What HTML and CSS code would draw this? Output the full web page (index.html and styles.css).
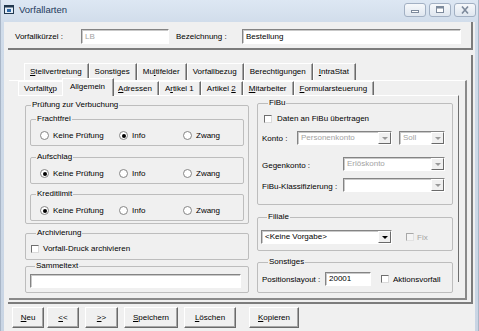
FILE: index.html
```html
<!DOCTYPE html>
<html lang="de">
<head>
  <meta charset="UTF-8">
  <title>Vorfallarten</title>
  <link rel="stylesheet" href="styles.css">
</head>
<body>
  <div class="window">
    <div class="titlebar">
      <svg class="appicon" width="11" height="10" viewBox="0 0 11 10">
        <rect x="0.5" y="0.5" width="9" height="8" fill="#e4edf7" stroke="#22384f"/>
        <rect x="0.5" y="0.5" width="9" height="2" fill="#22384f"/>
        <rect x="3" y="4" width="4" height="3" fill="#2f6aa8"/>
      </svg>
      <span class="title">Vorfallarten</span>
      <div class="winbtns">
        <span class="winbtn">
          <svg width="10" height="8" viewBox="0 0 10 8"><rect x="1.5" y="4.5" width="7" height="2" fill="#fff" stroke="#7d8a9c"/></svg>
        </span>
        <span class="winbtn">
          <svg width="10" height="8" viewBox="0 0 10 8"><rect x="1.5" y="0.5" width="7" height="6" fill="#fff" stroke="#7d8a9c"/><rect x="1.5" y="0.5" width="7" height="2" fill="#7d8a9c"/></svg>
        </span>
        <span class="winbtn">
          <svg width="10" height="8" viewBox="0 0 10 8"><path d="M2 0.5 L8 7.5 M8 0.5 L2 7.5" stroke="#7d8a9c" stroke-width="1.6"/></svg>
        </span>
      </div>
    </div>

    <div class="client">
      <div class="head">
        <span class="lbl-head">Vorfallkürzel :</span>
        <span class="edit edit-kuerzel off">LB</span>
        <span class="lbl-head lbl-bez">Bezeichnung :</span>
        <span class="edit edit-bez">Bestellung</span>
      </div>

      <div class="frame">
        <div class="tabrow back">
          <span class="tab"><u>S</u>tellvertretung</span>
          <span class="tab">Sonstiges</span>
          <span class="tab">Mu<u>l</u>tifelder</span>
          <span class="tab">Vorfallbezug</span>
          <span class="tab">Berechtigungen</span>
          <span class="tab"><u>I</u>ntraStat</span>
        </div>

        <div class="tabctl">
          <div class="tabrow front">
            <span class="tab">Vorfallt<u>y</u>p</span>
            <span class="tab active">Allgemein</span>
            <span class="tab"><u>A</u>dressen</span>
            <span class="tab">A<u>r</u>tikel 1</span>
            <span class="tab">Artikel <u>2</u></span>
            <span class="tab"><u>M</u>itarbeiter</span>
            <span class="tab"><u>F</u>ormularsteuerung</span>
          </div>

          <div class="page">
            <div class="col col-left">
              <fieldset class="grp outer">
                <legend>Prüfung zur Verbuchung</legend>
                <fieldset class="grp inner first">
                  <legend>Frachtfrei</legend>
                  <div class="radios">
                    <span class="opt"><span class="radio"></span>Keine Prüfung</span>
                    <span class="opt"><span class="radio on"></span>Info</span>
                    <span class="opt"><span class="radio"></span>Zwang</span>
                  </div>
                </fieldset>
                <fieldset class="grp inner second">
                  <legend>Aufschlag</legend>
                  <div class="radios">
                    <span class="opt"><span class="radio on"></span>Keine Prüfung</span>
                    <span class="opt"><span class="radio"></span>Info</span>
                    <span class="opt"><span class="radio"></span>Zwang</span>
                  </div>
                </fieldset>
                <fieldset class="grp inner third">
                  <legend>Kreditlimit</legend>
                  <div class="radios">
                    <span class="opt"><span class="radio on"></span>Keine Prüfung</span>
                    <span class="opt"><span class="radio"></span>Info</span>
                    <span class="opt"><span class="radio"></span>Zwang</span>
                  </div>
                </fieldset>
              </fieldset>

              <fieldset class="grp archiv">
                <legend>Archivierung</legend>
                <div class="checkrow"><span class="check"></span>Vorfall-Druck archivieren</div>
              </fieldset>

              <fieldset class="grp sammel">
                <legend>Sammeltext</legend>
                <div class="sammelrow"><span class="edit edit-sammel"></span></div>
              </fieldset>
            </div>

            <div class="col col-right">
              <fieldset class="grp fibu">
                <legend>FiBu</legend>
                <div class="checkrow"><span class="check"></span>Daten an FiBu übertragen</div>
                <div class="row row-konto">
                  <span class="lab lab-konto">Konto :</span>
                  <span class="combo cb-konto off"><span class="val">Personenkonto</span><span class="drop"></span></span>
                  <span class="combo cb-soll off"><span class="val">Soll</span><span class="drop"></span></span>
                </div>
                <div class="row row-gegen">
                  <span class="lab lab-wide low">Gegenkonto :</span>
                  <span class="combo cb-wide off"><span class="val">Erlöskonto</span><span class="drop"></span></span>
                </div>
                <div class="row row-klass">
                  <span class="lab lab-wide low">FiBu-Klassifizierung :</span>
                  <span class="combo cb-wide off"><span class="val"></span><span class="drop"></span></span>
                </div>
              </fieldset>

              <fieldset class="grp filiale">
                <legend>Filiale</legend>
                <div class="row row-filiale">
                  <span class="combo cb-filiale"><span class="val">&lt;Keine Vorgabe&gt;</span><span class="drop"></span></span>
                  <span class="fix"><span class="check off"></span>Fix</span>
                </div>
              </fieldset>

              <fieldset class="grp sonst">
                <legend>Sonstiges</legend>
                <div class="row row-sonst">
                  <span class="lab lab-pos">Positionslayout :</span>
                  <span class="edit edit-pos">20001</span>
                  <span class="aktion"><span class="check"></span>Aktionsvorfall</span>
                </div>
              </fieldset>
            </div>
          </div>
        </div>
      </div>

      <div class="btnbar">
        <button class="btn w-neu"><u>N</u>eu</button>
        <button class="btn w-nav"><u>&lt;</u>&lt;</button>
        <button class="btn w-nav2 gap"><u>&gt;</u>&gt;</button>
        <button class="btn w-save gap"><u>S</u>peichern</button>
        <button class="btn w-del gap"><u>L</u>öschen</button>
        <button class="btn w-copy gap-l"><u>K</u>opieren</button>
      </div>
    </div>
  </div>
</body>
</html>
```

FILE: styles.css
```css
* { box-sizing: border-box; }
body { margin: 0; font-family: "Liberation Sans", Arial, sans-serif; font-size: 8px; color: #000; background: #f0f0f0; }

/* window chrome */
.window { width: 479px; height: 331px; overflow: hidden; background: linear-gradient(#dde7f3, #d0dcea 24px, #c9d5e4); border-left: 1px solid #a9b6c7; border-right: 1px solid #a9b6c7; }
.titlebar { height: 21px; display: flex; align-items: center; padding: 0 2px 2px 3px; }
.appicon { display: block; }
.title { margin-left: 4px; font-size: 9.5px; color: #1e3a5c; }
.winbtns { margin-left: auto; display: flex; gap: 3px; }
.winbtn { width: 22px; height: 14px; border: 1px solid #a2b0c3; border-radius: 3px; background: linear-gradient(#f6f8fb, #dfe6ef); display: flex; align-items: center; justify-content: center; }
.client { margin: 0 3px; height: 310px; background: #f0f0f0; }

/* header fields */
.head { margin: 1px 0 0 4px; width: 465px; height: 28px; padding: 3px 0 0 7px; display: flex; align-items: center; border-right: 2px solid #7c7c7c; border-bottom: 2px solid #7c7c7c; }
.lbl-head { width: 66px; }
.lbl-bez { margin-left: 7px; }
.edit { display: block; height: 15px; padding-left: 3px; line-height: 13px; background: #fff; border: 1px solid; border-color: #848484 #fff #fff #848484; box-shadow: inset 1px 1px 0 #c9c9c9; white-space: nowrap; }
.edit.off { color: #a3a3a3; }
.edit-kuerzel { width: 88px; }
.edit-bez { width: 219px; }

/* outer frame + tabs */
.frame { margin: 5px 0 0 4px; width: 465px; height: 249px; padding-top: 8px; border-right: 2px solid #7c7c7c; border-bottom: 2px solid #7c7c7c; }
.tabrow { display: flex; }
.tabrow.back { margin-left: 16px; height: 17px; }
.tabrow.front { margin-left: 9px; height: 14px; }
.tab { padding: 0 6px 0 5px; border-top: 1px solid #fff; border-left: 1px solid #fff; border-right: 1px solid #6a6a6a; box-shadow: inset -1px 0 0 #a6a6a6; white-space: nowrap; }
.back .tab { line-height: 15px; }
.front .tab { line-height: 13px; }
.front .tab.active { position: relative; z-index: 1; margin: -3px -2px 0 -2px; height: 18px; padding: 0 8px 0 7px; line-height: 15px; background: #f0f0f0; }
.tabctl { margin-left: 1px; width: 458px; height: 220px; border-top: 1px solid #fff; border-right: 2px solid #8a8a8a; border-bottom: 2px solid #8a8a8a; }
.page { margin-left: 9px; width: 441px; height: 187px; padding: 2px 0 0 7px; display: flex; gap: 8px; border-top: 1px solid #fff; border-right: 1px solid #6e6e6e; }
.col-left { width: 224px; margin-top: 2px; }
.col-right { width: 196px; }

/* group boxes */
.grp { margin: 0; padding: 0; min-width: 0; border: 1px solid #bdbdbd; border-radius: 2px; }
.grp legend { padding: 0 1px; margin-left: 5px; line-height: 10px; }
.col-right .grp legend { margin-left: 6px; }
.outer { padding-bottom: 2px; }
.inner { margin: 0 4px; padding: 6px 0 4px; }
.inner.first { margin-top: 4px; }
.inner.second { margin-top: 6px; }
.inner.third { margin-top: 5px; }
.radios { display: grid; grid-template-columns: 79px 64px auto; padding-left: 9px; }
.opt { display: flex; align-items: center; height: 11px; white-space: nowrap; }
.radio { width: 9px; height: 9px; margin-right: 4px; border-radius: 50%; border: 1px solid #858585; background: #fff; display: flex; align-items: center; justify-content: center; }
.radio.on::after { content: ""; width: 4px; height: 4px; border-radius: 50%; background: #000; }
.check { width: 8px; height: 8px; margin-right: 4px; border: 1px solid; border-color: #6e6e6e #dadada #dadada #6e6e6e; background: #fff; flex: none; }
.check.off { border-color: #a8a8a8 #e2e2e2 #e2e2e2 #a8a8a8; background: #f4f4f4; }
.checkrow { display: flex; align-items: center; height: 11px; white-space: nowrap; }

.archiv { margin-top: 4px; padding: 5px 0 5px 5px; }
.sammel { margin-top: 1px; padding: 3px 0 4px 4px; }
.edit-sammel { width: 211px; height: 14px; }

.fibu { margin-top: 0; padding: 5px 0 12px 4px; }
.fibu .checkrow { padding-left: 2px; }
.fibu .checkrow .check { margin-right: 5px; }
.row { display: flex; align-items: center; height: 14px; white-space: nowrap; }
.row-konto { margin-top: 7px; }
.row-gegen { margin-top: 12px; }
.row-klass { margin-top: 7px; }
.lab { line-height: 11px; }
.lab.low { align-self: flex-end; }
.lab-konto { width: 35px; }
.lab-wide { width: 81px; }

.combo { display: flex; height: 14px; background: #fff; border: 1px solid; border-color: #848484 #fff #fff #848484; box-shadow: inset 1px 1px 0 #c9c9c9; }
.combo .val { flex: 1; padding-left: 3px; line-height: 12px; overflow: hidden; white-space: nowrap; }
.combo .drop { width: 13px; border: 1px solid; border-color: #fff #6a6a6a #6a6a6a #fff; background: #f0f0f0; display: flex; align-items: center; justify-content: center; }
.combo .drop::after { content: ""; border-left: 3px solid transparent; border-right: 3px solid transparent; border-top: 3px solid #000; }
.combo.off .val { color: #a3a3a3; }
.combo.off .drop::after { border-top-color: #9a9a9a; }
.cb-konto { width: 95px; }
.cb-soll { width: 46px; margin-left: 7px; }
.cb-wide { width: 102px; }

.filiale { margin-top: 7px; padding: 8px 0 6px 3px; }
.cb-filiale { width: 131px; }
.fix { display: flex; align-items: center; margin-left: 14px; color: #a3a3a3; }
.fix .check { margin-right: 3px; }

.sonst { margin-top: 6px; padding: 5px 0 6px 4px; }
.lab-pos { width: 63px; }
.edit-pos { width: 46px; height: 14px; line-height: 12px; }
.aktion { display: flex; align-items: center; margin-left: 10px; }

/* bottom buttons */
.btnbar { display: flex; gap: 3px; margin: 3px 0 0 8px; }
.btn { height: 21px; padding: 0; font: inherit; color: #000; background: #f0f0f0; border: 1px solid; border-color: #fff #6a6a6a #6a6a6a #fff; box-shadow: inset -1px -1px 0 #a6a6a6; }
.btn.gap { margin-left: 3px; }
.btn.gap-l { margin-left: 10px; }
.w-neu { width: 32px; }
.w-nav { width: 32px; }
.w-nav2 { width: 33px; }
.w-save { width: 54px; }
.w-del { width: 52px; }
.w-copy { width: 50px; }
```
